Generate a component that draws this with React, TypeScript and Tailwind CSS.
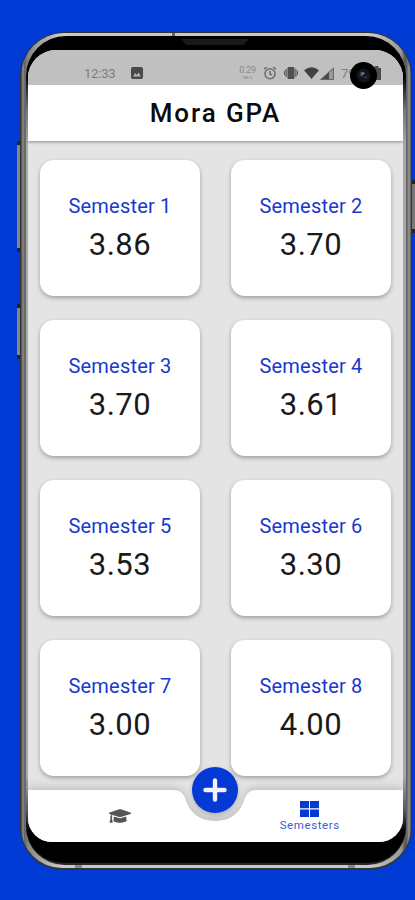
import { FaGraduationCap } from "react-icons/fa";

const semesters = [
  { name: "Semester 1", gpa: "3.86" },
  { name: "Semester 2", gpa: "3.70" },
  { name: "Semester 3", gpa: "3.70" },
  { name: "Semester 4", gpa: "3.61" },
  { name: "Semester 5", gpa: "3.53" },
  { name: "Semester 6", gpa: "3.30" },
  { name: "Semester 7", gpa: "3.00" },
  { name: "Semester 8", gpa: "4.00" },
];

function StatusBar() {
  return (
    <div className="relative z-10 h-[35px] shrink-0 bg-[#c0c0c0] flex items-center pt-[11px] pl-[56px] text-[#7d7d7d]">
      <span className="w-[34px] text-[13px] leading-none tracking-[-0.2px]">12:33</span>
      <svg className="ml-[13px] size-3" viewBox="0 0 12 12">
        <rect width="12" height="12" rx="2" fill="#484848" />
        <path d="M2 9.5 4.3 6l1.5 2L7.5 5.5 10 9.5Z" fill="#b5b5b5" />
      </svg>

      {/* Network speed */}
      <div className="ml-[96px] w-[17px] flex flex-col items-center leading-none text-[#888]">
        <span className="text-[9px] leading-[9px] tracking-[-0.3px]">0.29</span>
        <span className="text-[4px] leading-[5px]">KB/S</span>
      </div>

      {/* Alarm */}
      <svg className="ml-[7px] size-[14px]" viewBox="0 0 14 14" fill="none" stroke="#6c6c6c" strokeWidth="1.5">
        <circle cx="7" cy="7.8" r="5" />
        <path d="M1 3.2 3.8 1M13 3.2 10.2 1M7 5v3l2 1.2" />
      </svg>

      {/* Vibrate */}
      <svg className="ml-[7px] w-[14px] h-3" viewBox="0 0 14 12" fill="#505050">
        <rect x="3.5" width="7" height="12" rx="1" />
        <path d="M1.5 2h1.2v8H1.5zM11.3 2h1.2v8h-1.2zM0 4h.9v4H0zM13.1 4h.9v4h-.9z" />
      </svg>

      {/* Wifi and signal */}
      <svg className="ml-[6px] w-[15px] h-3" viewBox="0 0 15 12">
        <path d="M0 3.2Q7.5-2.6 15 3.2L7.5 12Z" fill="#424242" />
      </svg>
      <svg className="ml-[1px] w-[14px] h-[13px]" viewBox="0 0 14 13">
        <path d="M14 0v13H0Z" fill="#9a9a9a" />
        <path d="M9 4.6V13H0Z" fill="#484848" />
        <path d="M13.4 1.2v11.3H1.2Z" fill="none" stroke="#666" strokeWidth="1" />
      </svg>
      <span className="ml-[7px] w-[26px] text-[13px] leading-none">79</span>
      <svg className="ml-[5px] w-[9px] h-[14px]" viewBox="0 0 9 14">
        <path d="M2.5 0h4v2H9v12H0V2h2.5z" fill="#4c4c4c" />
      </svg>

      {/* Camera cutout */}
      <div className="absolute left-[322px] top-[12px] size-[27px] rounded-full bg-black flex items-center justify-center">
        <svg className="size-[15px]" viewBox="0 0 15 15">
          <circle cx="7.5" cy="7.5" r="7" fill="#11151a" />
          <path d="M5 3.2 8 5.5 6.4 9.4 3.3 7Z" fill="#38474d" />
          <ellipse cx="7" cy="5.4" rx="1.7" ry="1.1" fill="#6c7e84" />
          <circle cx="9.8" cy="9.2" r="1.2" fill="#323a54" />
        </svg>
      </div>
    </div>
  );
}

function SemesterCard({ name, gpa }: { name: string; gpa: string }) {
  return (
    <div className="h-[136px] rounded-[14px] bg-white shadow-[0_2px_4px_rgba(0,0,0,0.3)] flex flex-col items-center pt-8">
      <span className="text-[20px] leading-7 tracking-[0.2px] text-[#1739cc]">{name}</span>
      <span className="mt-[6px] text-[31px] leading-[38px] tracking-[0.5px] text-[#1a1a1a]">{gpa}</span>
    </div>
  );
}

function BottomNav() {
  return (
    <nav className="relative h-[52px] shrink-0 grid grid-cols-2">
      <svg
        className="absolute inset-0 w-full h-full overflow-visible drop-shadow-[0_-2px_4px_rgba(0,0,0,0.18)]"
        viewBox="0 0 375 52"
        preserveAspectRatio="none"
      >
        <path d="M0 0H145C152 0 155 3 157 8C161 22 171 31 187 31S213 22 217 8C219 3 222 0 229 0H375V52H0Z" fill="#fff" />
      </svg>
      <div className="relative flex justify-center pt-[17px] pr-[3px]">
        <FaGraduationCap className="w-[22px] h-[18px] text-[#555]" preserveAspectRatio="none" />
      </div>
      <div className="relative flex flex-col items-center pt-[11px] pl-[1px] text-[#0639d2]">
        <svg className="w-[19px] h-4" viewBox="0 0 19 16" fill="currentColor">
          <path d="M0 0h9v7.300H0zM10 0h9v7.300h-9zM0 8.500h9V16H0zM10 8.500h9V16h-9z" />
        </svg>
        <span className="mt-[1px] text-[11.500px] leading-[14px] tracking-[0.6px] text-[#3c5cd8]">Semesters</span>
      </div>
      <button className="absolute left-[164px] -top-[23px] size-[46px] rounded-full bg-[#0439d4] flex items-center justify-center shadow-[0_2px_5px_rgba(0,0,0,0.22)]">
        <svg className="size-6" viewBox="0 0 24 24" fill="none" stroke="#f1f1ff" strokeWidth="4.400" strokeLinecap="round">
          <path d="M12 2.500v19M2.500 12h19" />
        </svg>
      </button>
    </nav>
  );
}

export default function App() {
  return (
    <div className="w-[415px] h-[900px] overflow-hidden bg-[#003bd6] pt-8 pl-5 font-[Roboto,sans-serif]">
      <div className="relative w-[392px] h-[838px]">

        {/* Side buttons */}
        <div className="absolute -left-[3px] top-[109px] w-1 h-[111px] bg-[#85858a] border-y-4 border-[#222]" />
        <div className="absolute -left-[3px] top-[272px] w-1 h-[55px] bg-[#85858a] border-y-4 border-[#222]" />
        <div className="absolute left-[391px] top-[148px] w-1 h-[53px] bg-[#777] border-y-4 border-[#222]" />

        {/* Metal frame */}
        <div className="relative w-full h-full rounded-t-[44px] rounded-b-[42px] border border-b-2 border-[#333] bg-[linear-gradient(to_right,#444_0,#8e8e8a_2px,#75756f_3px,#5c5c5c_4px,#777_5px,#888_8px,#a5a5a5_20px,#c9c9c9_40px,#c9c9c9_350px,#999_380px,#555_384px,#666_386px,#999_388px,#555_390px)] px-[5px] pt-[3px] pb-[3px] overflow-hidden">
          <div className="absolute left-[151px] top-0 w-[3px] h-[3px] bg-[#666]" />
          <div className="absolute left-[54px] bottom-0 w-[7px] h-[3px] bg-[#888]" />
          <div className="absolute left-[327px] bottom-0 w-[7px] h-[3px] bg-[#888]" />

          {/* Bezel: black at the ends, metal reflections along the sides */}
          <div className="relative w-full h-full rounded-t-[40px] rounded-b-[38px] border-b-2 border-[#2a2a2a] bg-[linear-gradient(to_bottom,#000_40px,#777_75px,#a8a8a8_110px,#a8a8a8_740px,#555_775px,#000_795px)] pt-[14px] pl-[2px] pr-[3px]">
            <div className="absolute left-[155px] top-[3px] w-[68px] h-[6px] bg-[#191919] [clip-path:polygon(0_0,100%_0,92%_100%,8%_100%)]" />

            {/* Screen */}
            <div className="w-[375px] h-[792px] rounded-t-[28px] rounded-b-[24px] overflow-hidden bg-[#e4e4e4] flex flex-col">
              <StatusBar />
              <header className="relative h-[56px] shrink-0 bg-white shadow-[0_1px_3px_rgba(0,0,0,0.4)] flex items-center justify-center">
                <h1 className="text-[26px] leading-8 font-medium tracking-[1.900px] text-[#0b0b0b]">Mora GPA</h1>
              </header>
              <main className="h-[649px] shrink-0 grid grid-cols-[160px_160px] content-start gap-x-[31px] gap-y-6 pt-[19px] pl-3">
                {semesters.map((s) => (
                  <SemesterCard key={s.name} name={s.name} gpa={s.gpa} />
                ))}
              </main>
              <BottomNav />
            </div>
          </div>
        </div>
      </div>
    </div>
  );
}
